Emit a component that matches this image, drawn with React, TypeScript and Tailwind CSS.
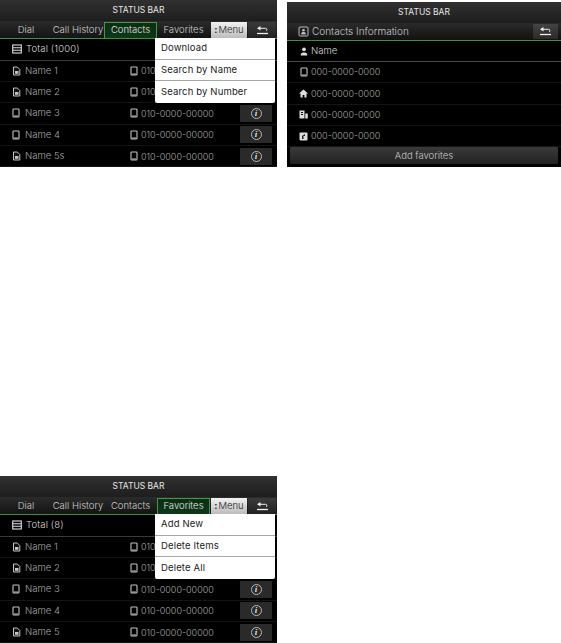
const font = "font-['Inter',sans-serif] font-light";

function SimIcon() {
  return (
    <svg width="9" height="10" viewBox="0 0 9 10" className="shrink-0">
      <path d="M1.500 1h3.800L7.800 3.500V9H1.500z" fill="#111" stroke="#c4c4c4" strokeWidth="1" />
      <rect x="3" y="5" width="3.500" height="2.800" fill="#c4c4c4" />
    </svg>
  );
}

function PhoneIcon() {
  return (
    <svg width="8" height="10" viewBox="0 0 8 10" className="shrink-0">
      <rect x="1" y="1" width="6" height="8" rx="0.800" fill="none" stroke="#c4c4c4" strokeWidth="1.100" />
      <path d="M2 8h4" stroke="#c4c4c4" strokeWidth="1" />
    </svg>
  );
}

function ListIcon() {
  return (
    <svg width="10" height="10" viewBox="0 0 10 10" className="shrink-0">
      <rect x="0.700" y="1" width="8.600" height="8" fill="none" stroke="#e0e0e0" strokeWidth="1.100" />
      <path d="M1 3.800h8M1 6.200h8" stroke="#e0e0e0" strokeWidth="1.100" />
    </svg>
  );
}

function BackIcon() {
  return (
    <svg width="13" height="9" viewBox="0 0 13 9">
      <path d="M4.500 0 1 2.300 4.500 4.500z" fill="#f0f0f0" />
      <path d="M4 2.300h5.500a1.400 1.400 0 0 1 1.400 1.400a1.400 1.400 0 0 1-.9 1.200" fill="none" stroke="#f0f0f0" strokeWidth="1" />
      <path d="M1 7.500h11" stroke="#f0f0f0" strokeWidth="1.300" />
    </svg>
  );
}

function PersonIcon() {
  return (
    <svg width="8" height="9" viewBox="0 0 8 9" className="shrink-0">
      <circle cx="4" cy="2.300" r="1.900" fill="#ddd" />
      <path d="M.8 8.500V6.800l2-1.300h2.400l2 1.300v1.700z" fill="#ddd" />
    </svg>
  );
}

function HomeIcon() {
  return (
    <svg width="9" height="9" viewBox="0 0 9 9" className="shrink-0">
      <path d="M4.500.5 9 4.600H7.500V8.500H5.400V6H3.600V8.500H1.500V4.600H0z" fill="#ddd" />
    </svg>
  );
}

function OfficeIcon() {
  return (
    <svg width="9" height="9" viewBox="0 0 9 9" className="shrink-0">
      <path d="M.5.500h5v8h-5zM6.300 3.500h2.500v5H6.300z" fill="#ddd" />
      <path d="M2 2.500h2M2 4.500h2" stroke="#111" strokeWidth="1" />
    </svg>
  );
}

function NoteIcon() {
  return (
    <svg width="9" height="9" viewBox="0 0 9 9" className="shrink-0">
      <rect x=".5" y=".5" width="8" height="8" rx="1" fill="#ddd" />
      <path d="M3 7V4l3-2v2H4.500v3z" fill="#222" />
    </svg>
  );
}

function CardIcon() {
  return (
    <svg width="11" height="11" viewBox="0 0 11 11" className="shrink-0">
      <rect x="1" y="1" width="9" height="9" rx="1" fill="none" stroke="#bbb" strokeWidth="1" />
      <circle cx="5.500" cy="4.200" r="1.300" fill="#bbb" />
      <path d="M3.300 8.500V7l1.200-1h2l1.200 1v1.500z" fill="#bbb" />
    </svg>
  );
}

function InfoButton() {
  return (
    <div className="ml-auto mr-[5px] flex h-[17px] w-[32px] items-center justify-center rounded-[1px] bg-[#2a2a2a]">
      <div className="flex h-[11px] w-[11px] items-center justify-center rounded-full border border-[#b8b8b8] font-['Liberation_Serif',serif] text-[9px] font-bold italic leading-none text-[#e0e0e0]">
        i
      </div>
    </div>
  );
}

function StatusBar() {
  return (
    <div className="flex h-[21px] items-center justify-center bg-gradient-to-b from-[#303030] to-[#1e1e1e] text-[8.500px] font-normal text-[#e6e6e6]">
      STATUS BAR
    </div>
  );
}

function Tab({ label, active, width }: { label: string; active: boolean; width: string }) {
  return (
    <div
      className={`flex h-full items-center justify-center whitespace-nowrap text-[9.500px] ${width} ${
        active
          ? "rounded-t-[1px] border-x border-t border-[#3f9a48] bg-gradient-to-b from-[#0d2c14] to-[#0a3a16] text-[#e4e4e4]"
          : "text-[#cfcfcf]"
      }`}
    >
      {label}
    </div>
  );
}

function TabBar({ active }: { active: string }) {
  return (
    <div className="flex h-[18px] items-stretch border-b border-[#3f8f45] bg-gradient-to-b from-[#2b2b2b] to-[#141414] pt-px">
      <Tab label="Dial" active={active === "Dial"} width="w-[52px]" />
      <Tab label="Call History" active={active === "Call History"} width="w-[52px]" />
      <Tab label="Contacts" active={active === "Contacts"} width="w-[53px]" />
      <Tab label="Favorites" active={active === "Favorites"} width="w-[53px]" />
      <div className="ml-[1px] flex h-[16px] w-[36px] items-center justify-center gap-px bg-gradient-to-b from-[#f2f2f2] to-[#bcbcbc] text-[9.500px] text-[#222]">
        <span className="font-bold">:</span>Menu
      </div>
      <div className="ml-[1px] flex h-[16px] w-[28px] items-center justify-center rounded-[1px] bg-gradient-to-b from-[#3a3a3a] to-[#222]">
        <BackIcon />
      </div>
    </div>
  );
}

function NameRow({ name, sim, covered }: { name: string; sim: boolean; covered?: boolean }) {
  // rows behind the open menu only show the start of the number
  return (
    <div className="flex h-[21.400px] items-center border-b border-[#141414] pl-[12px] text-[#a8a8a8]">
      <span className="flex w-[12px]">{sim ? <SimIcon /> : <PhoneIcon />}</span>
      <span className="ml-[1px] w-[105px] text-[9.500px]">{name}</span>
      <PhoneIcon />
      <span className="ml-[3px] text-[9px]">{covered ? "010" : "010-0000-00000"}</span>
      {!covered && <InfoButton />}
    </div>
  );
}

function Menu({ items }: { items: string[] }) {
  return (
    <div className="absolute left-[155px] top-[38px] z-10 w-[120px] rounded-b-[2px] bg-white text-[9.500px] font-normal tracking-[0.15px] text-[#222]">
      {items.map((it, i) => (
        <div
          key={it}
          className={`flex h-[21.500px] items-center pl-[6px] ${i < items.length - 1 ? "border-b border-[#a8a8a8]" : ""}`}
        >
          {it}
        </div>
      ))}
    </div>
  );
}

function ListScreen({
  active,
  total,
  items,
  names,
}: {
  active: string;
  total: string;
  items: string[];
  names: [string, boolean][];
}) {
  return (
    <div className="relative h-[167px] w-[277px] overflow-hidden bg-black">
      <StatusBar />
      <TabBar active={active} />
      <div className="flex h-[21.500px] items-center gap-[4px] border-b border-[#3a3a3a] pl-[12px] text-[9.500px] tracking-[0.15px] text-[#dcdcdc]">
        <ListIcon />
        {total}
      </div>
      {names.map(([n, s], i) => (
        <NameRow key={n} name={n} sim={s} covered={i < 2} />
      ))}
      <Menu items={items} />
    </div>
  );
}

function InfoRow({ icon }: { icon: React.ReactNode }) {
  return (
    <div className="flex h-[21.300px] items-center gap-[3px] border-b border-[#141414] pl-[12px] text-[9px] text-[#a8a8a8]">
      <span className="flex w-[9px] justify-center">{icon}</span>
      000-0000-0000
    </div>
  );
}

function InfoScreen() {
  return (
    <div className="mt-[2px] h-[165px] w-[274px] overflow-hidden bg-black">
      <StatusBar />
      <div className="flex h-[18px] items-center gap-[3px] border-b border-[#3f8f45] bg-gradient-to-b from-[#2b2b2b] to-[#111] pl-[11px] text-[10px] text-[#c8c8c8]">
        <CardIcon />
        Contacts Information
        <div className="ml-auto mr-[3px] flex h-[15px] w-[25px] items-center justify-center rounded-[1px] bg-gradient-to-b from-[#444] to-[#2a2a2a]">
          <BackIcon />
        </div>
      </div>
      <div className="flex h-[21px] items-center gap-[3px] border-b border-[#4a4a4a] pl-[12px] text-[9.500px] text-[#dcdcdc]">
        <span className="flex w-[9px] justify-center">
          <PersonIcon />
        </span>
        Name
      </div>
      <InfoRow icon={<PhoneIcon />} />
      <InfoRow icon={<HomeIcon />} />
      <InfoRow icon={<OfficeIcon />} />
      <InfoRow icon={<NoteIcon />} />
      <div className="mx-[3px] flex h-[17px] items-center justify-center rounded-[1px] bg-gradient-to-b from-[#3a3a3a] to-[#222] text-[9.500px] text-[#c8c8c8]">
        Add favorites
      </div>
    </div>
  );
}

export default function App() {
  return (
    <div className={`h-[643px] w-[561px] overflow-hidden bg-white ${font}`}>
      <div className="flex items-start gap-[10px]">
        <ListScreen
          active="Contacts"
          total="Total (1000)"
          items={["Download", "Search by Name", "Search by Number"]}
          names={[
            ["Name 1", true],
            ["Name 2", true],
            ["Name 3", false],
            ["Name 4", false],
            ["Name 5s", true],
          ]}
        />
        <InfoScreen />
      </div>
      <div className="mt-[309px]">
        <ListScreen
          active="Favorites"
          total="Total (8)"
          items={["Add New", "Delete Items", "Delete All"]}
          names={[
            ["Name 1", true],
            ["Name 2", true],
            ["Name 3", false],
            ["Name 4", false],
            ["Name 5", true],
          ]}
        />
      </div>
    </div>
  );
}
